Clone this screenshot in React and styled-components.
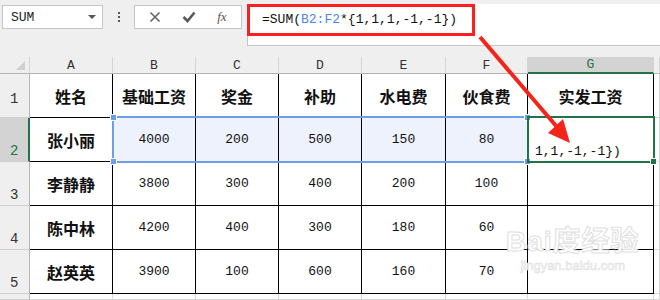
import React from "react";
import styled, { createGlobalStyle } from "styled-components";

const GlobalStyle = createGlobalStyle`
  html, body {
    margin: 0;
    padding: 0;
    background: #efefef;
  }
  #root {
    width: 660px;
    height: 300px;
    overflow: hidden;
  }
`;

const Page = styled.div`
  position: relative;
  width: 660px;
  height: 300px;
  background: #efefef;
  font-family: "Liberation Mono", monospace;
`;

const Toolbar = styled.div`
  display: flex;
  align-items: flex-start;
  height: 46px;
  padding-top: 4px;
  box-sizing: border-box;
`;

const NameBox = styled.div`
  display: flex;
  align-items: center;
  justify-content: space-between;
  box-sizing: border-box;
  width: 101px;
  height: 24px;
  margin: 1px 0 0 2px;
  padding: 0 6px 0 8px;
  background: #fff;
  border: 1px solid #c6c6c6;
  font-size: 13px;
  color: #222;
`;

const Caret = styled.span`
  width: 0;
  height: 0;
  border-left: 4px solid transparent;
  border-right: 4px solid transparent;
  border-top: 4px solid #555;
`;

const Dots = styled.div`
  display: flex;
  flex-direction: column;
  gap: 2px;
  width: 31px;
  align-items: center;
  padding-top: 8px;

  span {
    width: 2px;
    height: 2px;
    background: #555;
  }
`;

const ButtonGroup = styled.div`
  display: flex;
  align-items: center;
  justify-content: space-around;
  box-sizing: border-box;
  width: 108px;
  height: 24px;
  margin-top: 1px;
  padding: 0 4px;
  background: #fff;
  border: 1px solid #c6c6c6;
`;

const Fx = styled.span`
  font-family: "Liberation Serif", serif;
  font-style: italic;
  font-size: 13px;
  color: #555;
`;

const FormulaBar = styled.div`
  position: relative;
  flex: 1;
  height: 42px;
  margin-left: 5px;
  background: #fff;
  border-left: 1px solid #c6c6c6;
  border-bottom: 1px solid #c6c6c6;
  box-sizing: border-box;
  padding: 8px 0 0 14px;
  font-size: 13px;
  color: #111;
  white-space: pre;
`;

const Ref = styled.span`
  color: #4a86e8;
`;

const Highlight = styled.div`
  position: absolute;
  left: -1px;
  top: 0;
  width: 228px;
  height: 32px;
  box-sizing: border-box;
  border: 3px solid #ff1f1f;
`;

const Sheet = styled.div`
  display: grid;
  grid-template-columns: 30px 83px 83px 83px 83px 84px 82px 126px 1fr;
  grid-template-rows: 17px repeat(5, 44px) 1fr;
  height: 243px;
  margin-top: 11px;
`;

const ColHead = styled.div`
  grid-row: 1;
  grid-column: ${(p) => p.col};
  display: flex;
  align-items: center;
  justify-content: center;
  box-sizing: border-box;
  background: ${(p) => (p.active ? "#d3d3d3" : "#efefef")};
  color: ${(p) => (p.active ? "#217346" : "#333")};
  border-right: 1px solid #d4d4d4;
  border-bottom: ${(p) => (p.active ? "2px solid #217346" : "1px solid #b4b4b4")};
  font-size: 13px;
`;

const Corner = styled.div`
  grid-row: 1;
  grid-column: 1;
  position: relative;
  background: #efefef;
  border-right: 1px solid #d4d4d4;
  border-bottom: 1px solid #b4b4b4;
  box-sizing: border-box;

  &::after {
    content: "";
    position: absolute;
    right: 4px;
    bottom: 3px;
    border-left: 9px solid transparent;
    border-bottom: 9px solid #cfcfcf;
  }
`;

const RowHead = styled.div`
  grid-row: ${(p) => p.row};
  grid-column: 1;
  display: flex;
  align-items: flex-end;
  box-sizing: border-box;
  padding: 0 0 ${(p) => p.low ?? 2}px 10px;
  background: ${(p) => (p.active ? "#d3d3d3" : "#efefef")};
  color: ${(p) => (p.active ? "#217346" : "#333")};
  border-right: ${(p) => (p.active ? "2px solid #217346" : "1px solid #b4b4b4")};
  border-bottom: 1px solid #d0d0d0;
  font-size: 14px;
`;

const Cell = styled.div`
  grid-row: ${(p) => p.row};
  grid-column: ${(p) => p.col};
  display: flex;
  align-items: center;
  justify-content: center;
  box-sizing: border-box;
  background: ${(p) => (p.selected ? "#eef2fc" : "#fff")};
  border-right: 1px solid ${(p) => (p.blank ? "#d6d6d6" : "#000")};
  border-bottom: 1px solid ${(p) => (p.blank ? "#d6d6d6" : "#000")};
  font-family: ${(p) =>
    p.bold ? '"Noto Sans CJK SC", sans-serif' : '"Liberation Mono", monospace'};
  font-weight: ${(p) => (p.bold ? 700 : 400)};
  font-size: ${(p) => (p.bold ? "16px" : "13px")};
  color: #111;
`;

const Spill = styled.div`
  grid-column: 8;
  grid-row: 3;
  align-self: end;
  padding: 0 0 3px 7px;
  font-size: 13px;
  color: #111;
  white-space: pre;
`;

const Selection = styled.div`
  position: relative;
  grid-column: ${(p) => p.cols};
  grid-row: 3;
  margin: -2px -1px -1px -1px;
  border: 2px solid ${(p) => p.color};
  pointer-events: none;
`;

const Handle = styled.span`
  position: absolute;
  width: 5px;
  height: 5px;
  background: ${(p) => p.color};
  border: 1px solid #fff;
  ${(p) => (p.top ? "top: -4px;" : "bottom: -4px;")}
  ${(p) => (p.left ? "left: -4px;" : "right: -4px;")}
`;

const Watermark = styled.div`
  position: absolute;
  left: 506px;
  top: 226px;
  display: flex;
  flex-direction: column;
  align-items: center;
  color: #fff;
  -webkit-text-stroke: 1px #e0e0e0;
  font-family: "Liberation Sans", "Noto Sans CJK SC", sans-serif;
  pointer-events: none;

  b {
    font-size: 28px;
    line-height: 32px;
    letter-spacing: 1px;
  }

  span {
    font-size: 13px;
    -webkit-text-stroke: 0.6px #e0e0e0;
  }
`;

const Arrow = styled.svg`
  position: absolute;
  left: 0;
  top: 0;
  pointer-events: none;
`;

const cols = ["A", "B", "C", "D", "E", "F", "G"];

const rows = [
  ["姓名", "基础工资", "奖金", "补助", "水电费", "伙食费", "实发工资"],
  ["张小丽", "4000", "200", "500", "150", "80", ""],
  ["李静静", "3800", "300", "400", "200", "100", ""],
  ["陈中林", "4200", "400", "300", "180", "60", ""],
  ["赵英英", "3900", "100", "600", "160", "70", ""],
];

const App = () => {
  return (
    <Page>
      <GlobalStyle />
      <Toolbar>
        <NameBox>
          SUM
          <Caret />
        </NameBox>
        <Dots>
          <span />
          <span />
          <span />
        </Dots>
        <ButtonGroup>
          <svg width="12" height="12" viewBox="0 0 12 12">
            <path d="M1.5 1.5 L10.5 10.5 M10.5 1.5 L1.5 10.5" stroke="#666" strokeWidth="1.6" />
          </svg>
          <svg width="14" height="12" viewBox="0 0 14 12">
            <path d="M1.5 6 L5.5 10 L12.5 1.5" stroke="#5a5a5a" strokeWidth="2.6" fill="none" />
          </svg>
          <Fx>fx</Fx>
        </ButtonGroup>
        <FormulaBar>
          =SUM(<Ref>B2:F2</Ref>*{"{1,1,1,-1,-1})"}
          <Highlight />
        </FormulaBar>
      </Toolbar>

      <Sheet>
        <Corner />
        {cols.map((c, j) => (
          <ColHead key={c} col={j + 2} active={c === "G"}>
            {c}
          </ColHead>
        ))}
        <ColHead col={9} />

        {rows.map((r, i) => (
          <React.Fragment key={i}>
            <RowHead row={i + 2} active={i === 1} low={i === 0 ? 10 : 2}>
              {i + 1}
            </RowHead>
            {r.map((v, j) => (
              <Cell
                key={j}
                row={i + 2}
                col={j + 2}
                bold={j === 0 || i === 0}
                selected={i === 1 && j > 0 && j < 6}
              >
                {v}
              </Cell>
            ))}
            <Cell row={i + 2} col={9} blank />
          </React.Fragment>
        ))}

        <RowHead row={7} />
        {cols.map((c, j) => (
          <Cell key={c} row={7} col={j + 2} blank />
        ))}
        <Cell row={7} col={9} blank />

        <Spill>{"1,1,-1,-1})"}</Spill>
        <Selection cols="3 / 8" color="#6d9eeb">
          <Handle color="#6d9eeb" top left />
          <Handle color="#6d9eeb" top />
          <Handle color="#6d9eeb" left />
          <Handle color="#6d9eeb" />
        </Selection>
        <Selection cols="8" color="#217346">
          <Handle color="#217346" />
        </Selection>
      </Sheet>

      <Watermark>
        <b>Bai度经验</b>
        <span>jingyan.baidu.com</span>
      </Watermark>

      <Arrow width="660" height="300">
        <line x1="480" y1="37" x2="557" y2="127" stroke="#f3241a" strokeWidth="4" />
        <polygon points="570,143 548,133 563,119" fill="#f3241a" />
      </Arrow>
    </Page>
  );
};

export default App;
